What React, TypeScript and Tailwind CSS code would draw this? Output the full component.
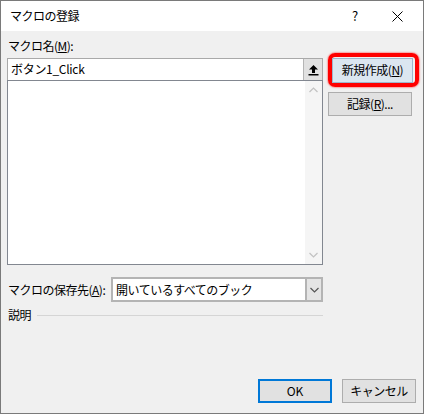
import React from "react";

const font = { fontFamily: '"Noto Sans CJK JP", "Noto Sans", sans-serif' };

function Mn({ c }: { c: string }) {
  return <span className="underline underline-offset-[1px] decoration-1">{c}</span>;
}

function Chevron({ dir, color }: { dir: "up" | "down"; color: string }) {
  return (
    <svg width="9" height="6" viewBox="0 0 9 6">
      <path
        d={dir === "up" ? "M0.5 5 L4.5 1 L8.5 5" : "M0.5 1 L4.5 5 L8.5 1"}
        fill="none"
        stroke={color}
        strokeWidth="1.2"
      />
    </svg>
  );
}

export default function App() {
  return (
    <div
      className="w-[424px] h-[414px] border border-[#7a7a7a] bg-[#f0f0f0] flex flex-col text-[12px] text-black"
      style={font}
    >
      {/* title bar */}
      <div className="h-[30px] bg-white flex items-center shrink-0">
        <span className="pl-[9px] flex-1 tracking-[-0.5px]">マクロの登録</span>
        <span className="w-[38px] text-center text-[13px]">?</span>
        <span className="w-[46px] flex justify-center mr-[3px]">
          <svg width="11" height="11" viewBox="0 0 11 11">
            <path d="M0.5 0.5 L10.5 10.5 M10.5 0.5 L0.5 10.5" stroke="#000" strokeWidth="1" />
          </svg>
        </span>
      </div>

      {/* body */}
      <div className="flex-1 flex flex-col">
        <div className="flex pl-[6px]">
          {/* left column */}
          <div className="w-[316px] flex flex-col pt-[8px]">
            <div className="h-[19px] leading-[14px] pl-[1px] tracking-[-0.5px]">
              マクロ名(<Mn c="M" />):
            </div>
            <div className="h-[22px] bg-white border border-[#a9a9a9] border-b-0 flex">
              <div className="flex-1 pl-[3px] leading-[20px] tracking-[-0.3px]">ボタン1_Click</div>
              <div className="w-[19px] h-[21px] bg-[#e1e1e1] border-l border-[#b5b5b5] flex items-center justify-center">
                <svg width="11" height="12" viewBox="0 0 11 12">
                  <path d="M5.5 1 L10 5.5 H7 V9 H4 V5.5 H1 Z" fill="#000" />
                  <rect x="0.5" y="10" width="10" height="1.5" fill="#000" />
                </svg>
              </div>
            </div>
            <div className="h-[185px] bg-white border border-[#828790] flex justify-end">
              <div className="w-[17px] bg-[#f5f5f5] flex flex-col items-center justify-between py-[6px]">
                <Chevron dir="up" color="#c2c2c2" />
                <Chevron dir="down" color="#c2c2c2" />
              </div>
            </div>
            <div className="mt-[12px] flex items-center h-[25px]">
              <div className="w-[104px] pl-[1px] tracking-[-0.5px]">
                マクロの保存先(<Mn c="A" />):
              </div>
              <div className="flex-1 h-[25px] bg-white border-2 border-[#b4b4b4] flex">
                <div className="flex-1 pl-[3px] leading-[21px] tracking-[-0.5px]">開いているすべてのブック</div>
                <div className="w-[16px] bg-[#e5e5e5] border-l-2 border-[#b4b4b4] flex items-center justify-center">
                  <Chevron dir="down" color="#555" />
                </div>
              </div>
            </div>
            <div className="mt-[5px] flex items-center h-[16px]">
              <span className="pl-[1px] pr-[6px] tracking-[-0.5px]">説明</span>
              <div className="flex-1 h-px bg-[#d5d5d5]" />
            </div>
          </div>

          {/* right column */}
          <div className="ml-[5px] pt-[22px] flex flex-col">
            <div className="w-[91px] h-[34px] rounded-[7px] border-[4px] border-[#ff0000] shadow-[0_0_2px_#ff0000] flex items-center">
              <div className="w-[81px] h-[25px] bg-[#dbe6f0] border border-[#9fb6cc] flex items-center justify-center tracking-[-0.5px]">
                新規作成(<Mn c="N" />)
              </div>
            </div>
            <div className="mt-[5px] w-[84px] h-[24px] bg-[#e1e1e1] border border-[#adadad] flex items-center justify-center tracking-[-0.5px]">
              記録(<Mn c="R" />)...
            </div>
          </div>
        </div>

        {/* bottom buttons */}
        <div className="mt-auto mb-[10px] mr-[7px] flex justify-end gap-[10px]">
          <div className="w-[74px] h-[24px] bg-[#e1e1e1] border-2 border-[#0078d7] flex items-center justify-center">
            OK
          </div>
          <div className="w-[74px] h-[24px] bg-[#e1e1e1] border border-[#adadad] flex items-center justify-center tracking-[-0.5px]">
            キャンセル
          </div>
        </div>
      </div>
    </div>
  );
}
